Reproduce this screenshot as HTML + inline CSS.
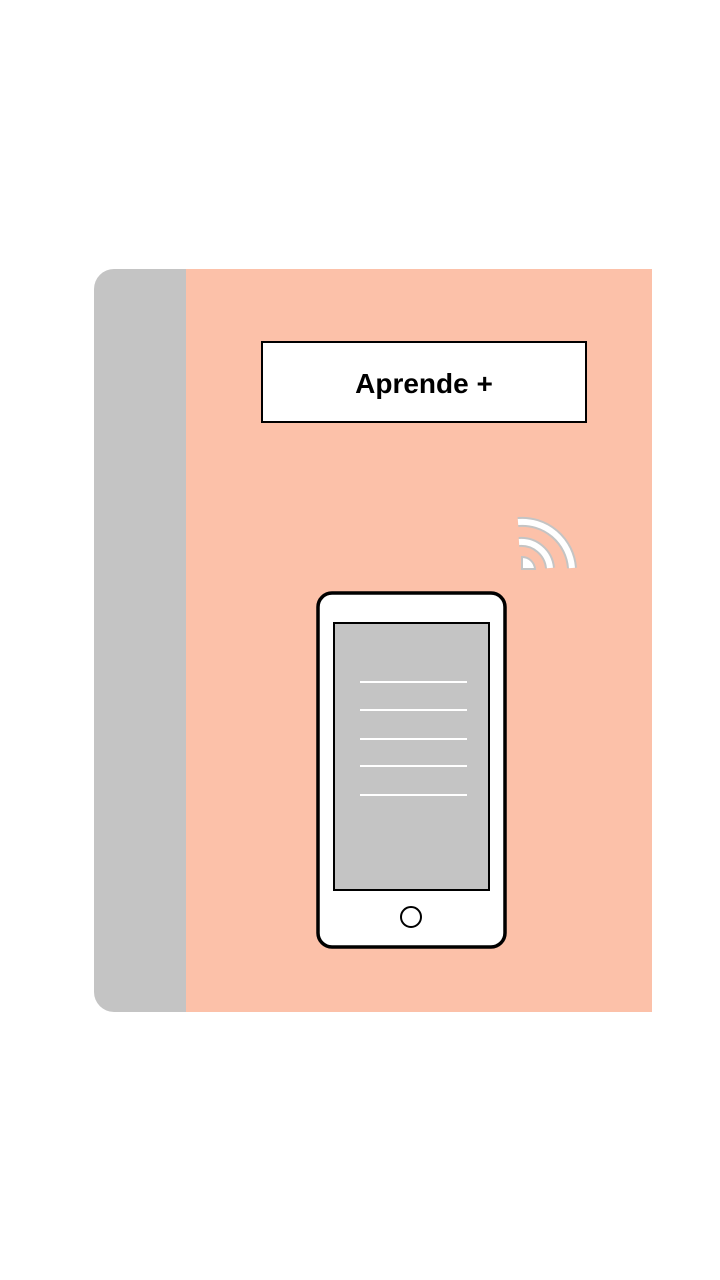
<!DOCTYPE html>
<html><head><style>
html,body{margin:0;padding:0;background:#fff;width:720px;height:1280px;overflow:hidden}
</style></head><body>
<svg width="720" height="1280" viewBox="0 0 720 1280" xmlns="http://www.w3.org/2000/svg" style="position:absolute;left:0;top:0">
<path d="M114 269 H200 V1012 H114 A20 20 0 0 1 94 992 V289 A20 20 0 0 1 114 269 Z" fill="#c4c4c4"/>
<rect x="186" y="269" width="466" height="743" fill="#fcc1a9"/>
<rect x="262" y="342" width="324" height="80" fill="#fff" stroke="#000" stroke-width="2"/>
<text x="424" y="393" text-anchor="middle" font-family="Liberation Sans, sans-serif" font-weight="bold" font-size="28" fill="#000">Aprende +</text>
<g fill="none" stroke-linecap="butt">
<g stroke="#c4c4c4" stroke-width="10">
<path d="M518 522 A50 50 0 0 1 572 568"/>
<path d="M519 542 A29 29 0 0 1 550 568"/>
</g>
<g stroke="#fff" stroke-width="6">
<path d="M518 522 A50 50 0 0 1 572 568"/>
<path d="M519 542 A29 29 0 0 1 550 568"/>
</g>
</g>
<path d="M522 569 L522 557 A13 13 0 0 1 535 569 Z" fill="#fff" stroke="#c4c4c4" stroke-width="2"/>
<rect x="318" y="593" width="187" height="354" rx="14" fill="#fff" stroke="#000" stroke-width="3.5"/>
<rect x="334" y="623" width="155" height="267" fill="#c4c4c4" stroke="#000" stroke-width="2"/>
<g stroke="#fff" stroke-width="2">
<line x1="360" y1="682" x2="467" y2="682"/>
<line x1="360" y1="710" x2="467" y2="710"/>
<line x1="360" y1="739" x2="467" y2="739"/>
<line x1="360" y1="766" x2="467" y2="766"/>
<line x1="360" y1="795" x2="467" y2="795"/>
</g>
<circle cx="411" cy="917" r="10" fill="#fff" stroke="#000" stroke-width="2"/>
</svg>
</body></html>
